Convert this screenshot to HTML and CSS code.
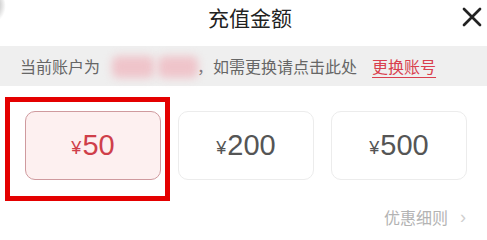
FILE: index.html
```html
<!DOCTYPE html>
<html lang="zh-CN">
<head>
<meta charset="utf-8">
<title>充值金额</title>
<link rel="stylesheet" href="styles.css">
</head>
<body>
<div class="sheet">
  <div class="corner"></div>
  <header class="header">
    <h1 class="title">充值金额</h1>
    <button class="close" aria-label="关闭">
      <svg width="20" height="20" viewBox="0 0 20 20"><path d="M2 2 L18 18 M18 2 L2 18" stroke="#222" stroke-width="2.7" stroke-linecap="round" fill="none"/></svg>
    </button>
  </header>
  <div class="account">
    <span class="label">当前账户为</span><span class="masked"><i class="blob b1"></i><i class="blob b2"></i></span><span class="label">，如需更换请点击此处</span><a class="switch" href="#">更换账号</a>
  </div>
  <div class="amounts">
    <div class="amount active"><span class="yen">¥</span><span class="num">50</span></div>
    <div class="amount"><span class="yen">¥</span><span class="num">200</span></div>
    <div class="amount"><span class="yen">¥</span><span class="num">500</span></div>
  </div>
  <div class="rules"><span>优惠细则</span><span class="chev">›</span></div>
</div>
</body>
</html>
```
FILE: styles.css
```css
*, *::before, *::after { box-sizing: border-box; }
html, body { margin: 0; padding: 0; }
body {
  width: 487px;
  height: 230px;
  overflow: hidden;
  background: #fff;
  font-family: "Noto Sans CJK SC", "Noto Sans", sans-serif;
}
.sheet {
  position: relative;
  width: 487px;
  height: 230px;
  background: #fff;
}
.corner {
  position: absolute;
  left: -12px;
  top: -6px;
  width: 18px;
  height: 28px;
  border-radius: 50%;
  background: radial-gradient(ellipse at 35% 40%, rgba(100,100,100,0.55), rgba(120,120,120,0.0) 70%);
}
.header {
  height: 46px;
  display: flex;
  align-items: center;
  justify-content: center;
  position: relative;
  padding-left: 13px;
}
.title {
  margin: 0;
  font-size: 21px;
  font-weight: 400;
  color: #222;
  line-height: 1;
  margin-top: -12px;
}
.close {
  position: absolute;
  right: 5px;
  top: 7px;
  width: 20px;
  height: 20px;
  padding: 0;
  border: 0;
  background: none;
  display: flex;
}
.account {
  height: 40px;
  background: #efefef;
  display: flex;
  align-items: center;
  padding-left: 20px;
  font-size: 16px;
  color: #666;
  white-space: nowrap;
}
.label { line-height: 1; }
.masked {
  position: relative;
  display: inline-block;
  width: 97px;
  height: 22px;
}
.blob {
  position: absolute;
  top: 1px;
  height: 22px;
  background: #efc4ca;
  filter: blur(4px);
  border-radius: 6px;
}
.b1 { left: 12px; width: 42px; }
.b2 { left: 58px; width: 40px; }
.switch {
  margin-left: 15px;
  color: #d9404e;
  text-decoration: underline;
  text-decoration-color: #d9404e;
  text-underline-offset: 4px;
  text-decoration-thickness: 1px;
  line-height: 1;
}
.amounts {
  display: flex;
  gap: 17px;
  padding-left: 25px;
  margin-top: 25px;
}
.amount {
  position: relative;
  width: 136px;
  height: 69px;
  border: 1px solid #ececec;
  border-radius: 10px;
  background: #fff;
  display: flex;
  align-items: center;
  justify-content: center;
  color: #555;
  font-family: "Liberation Sans", Arial, sans-serif;
}
.amount .yen { font-size: 18px; margin-top: 6px; margin-right: 1px; }
.amount .num { font-size: 29px; }
.amount.active {
  background: #fdf0f0;
  border-color: #cf9a9e;
  color: #cf3f4a;
}
.amount.active::after {
  content: "";
  position: absolute;
  left: -21px;
  top: -15px;
  width: 165px;
  height: 104px;
  border: 5px solid #e40000;
}
.rules {
  display: flex;
  justify-content: flex-end;
  align-items: center;
  gap: 12px;
  padding-right: 21px;
  margin-top: 26px;
  font-size: 16px;
  line-height: 22px;
  color: #b3b3b3;
}
.chev {
  color: #cfcfcf;
  font-size: 18px;
  font-family: "Liberation Sans", sans-serif;
}
```
